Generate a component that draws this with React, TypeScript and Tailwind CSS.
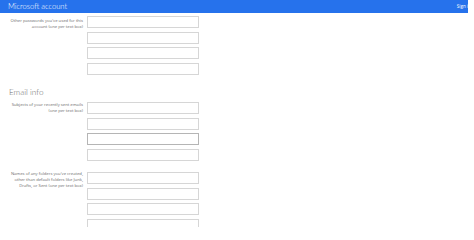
import React from "react";

const font = { fontFamily: '"Open Sans", "Noto Sans", sans-serif' };
const headFont = { fontFamily: 'Lato, "Open Sans", sans-serif' };

function Field({ dark }: { dark?: boolean }) {
  return (
    <div
      className={`h-[12px] w-[112px] border bg-white ${dark ? "border-[#b5b5b5]" : "border-[#d6d6d6]"}`}
    />
  );
}

function Row({
  label,
  labelClass,
  darkIndex,
}: {
  label: string[];
  labelClass: string;
  darkIndex?: number;
}) {
  return (
    <div className="flex gap-[4px]">
      <div className={`w-[83px] text-right text-[4.2px] leading-[6px] text-[#6d6d6d] ${labelClass}`}>
        {label.map((l, i) => (
          <div key={i} className="whitespace-nowrap">{l}</div>
        ))}
      </div>
      <div className="flex flex-col gap-[3.5px]">
        {[0, 1, 2, 3].map((i) => (
          <Field key={i} dark={i === darkIndex} />
        ))}
      </div>
    </div>
  );
}

export default function App() {
  return (
    <div className="h-[227px] w-[474px] overflow-hidden bg-white" style={font}>
      <div className="flex h-[13px] w-[468px] items-center justify-between overflow-hidden bg-[#2672ec] pl-[8px]">
        <span className="text-[7.6px] font-light leading-none text-white" style={headFont}>Microsoft account</span>
        <span className="mr-[-3px] whitespace-nowrap text-[4.6px] leading-none text-white">Sign in</span>
      </div>
      <div className="pt-[3px]">
        <Row
          label={["Other passwords you've used for this", "account (one per text box)"]}
          labelClass="pt-[2px]"
        />
        <div className="mt-[11px] pl-[9px] text-[8.2px] font-light leading-[12px] text-[#6a6a6a]" style={headFont}>Email info</div>
        <div className="mt-[4.5px]">
          <Row
            label={["Subjects of your recently sent emails", "(one per text box)"]}
            labelClass="pt-0"
            darkIndex={2}
          />
        </div>
        <div className="mt-[11.5px]">
          <Row
            label={[
              "Names of any folders you've created,",
              "other than default folders like Junk,",
              "Drafts, or Sent (one per text box)",
            ]}
            labelClass="mt-[-1px]"
          />
        </div>
      </div>
    </div>
  );
}
